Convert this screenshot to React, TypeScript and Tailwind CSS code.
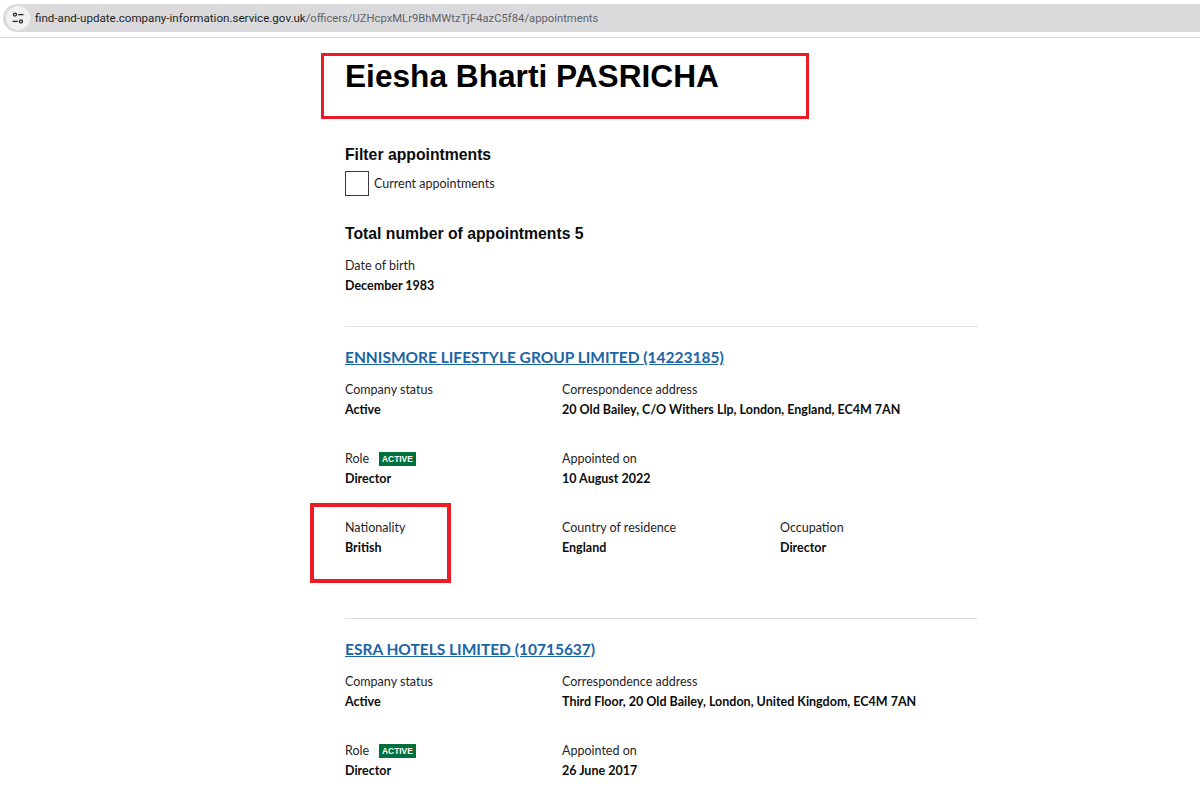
import React from 'react';

type Field = { label: string; value: string; badge?: boolean };

type Appointment = {
  title: string;
  rows: Field[][];
};

const appointments: Appointment[] = [
  {
    title: 'ENNISMORE LIFESTYLE GROUP LIMITED (14223185)',
    rows: [
      [
        { label: 'Company status', value: 'Active' },
        { label: 'Correspondence address', value: '20 Old Bailey, C/O Withers Llp, London, England, EC4M 7AN' },
      ],
      [
        { label: 'Role', value: 'Director', badge: true },
        { label: 'Appointed on', value: '10 August 2022' },
      ],
      [
        { label: 'Nationality', value: 'British' },
        { label: 'Country of residence', value: 'England' },
        { label: 'Occupation', value: 'Director' },
      ],
    ],
  },
  {
    title: 'ESRA HOTELS LIMITED (10715637)',
    rows: [
      [
        { label: 'Company status', value: 'Active' },
        { label: 'Correspondence address', value: 'Third Floor, 20 Old Bailey, London, United Kingdom, EC4M 7AN' },
      ],
      [
        { label: 'Role', value: 'Director', badge: true },
        { label: 'Appointed on', value: '26 June 2017' },
      ],
    ],
  },
];

const FieldBlock: React.FC<{ field: Field }> = ({ field }) => (
  <div>
    <div className="flex h-5 items-center whitespace-nowrap text-[12.5px] text-[#1f2328]">
      {field.label}
      {field.badge && (
        <span className="ml-[10px] bg-[#00703c] px-[3px] font-['Liberation_Sans',sans-serif] text-[8.4px] leading-[14px] font-bold text-white">
          ACTIVE
        </span>
      )}
    </div>
    <div className="flex h-5 items-center whitespace-nowrap text-[12.5px] font-bold text-[#0b0c0c]">{field.value}</div>
  </div>
);

const App: React.FC = () => {
  return (
    <div className="relative h-[804px] w-[1200px] overflow-hidden bg-white font-['Lato',sans-serif]">
      {/* Browser address bar */}
      <div className="h-[38px] border-b border-[#dcdcdc] pt-1">
        <div className="ml-[3px] flex h-[28px] items-center rounded-l-full bg-[#dadadc] pl-[3px]">
          <div className="flex h-[24px] w-[24px] items-center justify-center rounded-full bg-[#f1f1f2]">
            <svg width="12" height="12" viewBox="0 0 12 12" fill="none" stroke="#262626" strokeWidth="1.3">
              <circle cx="3" cy="2.6" r="1.5" />
              <path d="M6.2 2.6H11.5" />
              <circle cx="9" cy="9.4" r="1.5" />
              <path d="M0.5 9.4H5.8" />
            </svg>
          </div>
          <div className="ml-[5px] pt-[1px] whitespace-nowrap font-['Roboto',sans-serif] text-[11.6px] text-[#1f1f1f]">
            find-and-update.company-information.service.gov.uk
            <span className="text-[11.25px] text-[#5f6368]">/officers/UZHcpxMLr9BhMWtzTjF4azC5f84/appointments</span>
          </div>
        </div>
      </div>

      {/* Page content */}
      <main className="ml-[345px] w-[633px]">
        <h1 className="mt-[19px] font-['Liberation_Sans',sans-serif] text-[31.65px] leading-[38px] font-bold text-black">
          Eiesha Bharti PASRICHA
        </h1>

        <h2 className="mt-[50px] font-['Liberation_Sans',sans-serif] text-[15.75px] leading-5 font-bold text-[#0b0c0c]">
          Filter appointments
        </h2>
        <label className="mt-[6px] flex items-center">
          <span className="h-[25px] w-[24px] border border-[#3a3a3a] bg-white" />
          <span className="ml-[5px] pt-[1px] text-[12.5px] text-[#1f2328]">Current appointments</span>
        </label>

        <h2 className="mt-[28px] font-['Liberation_Sans',sans-serif] text-[15.75px] leading-5 font-bold text-[#0b0c0c]">
          Total number of appointments 5
        </h2>
        <div className="mt-[12px] flex h-5 items-center text-[12.5px] text-[#1f2328]">Date of birth</div>
        <div className="mb-[30px] flex h-5 items-center text-[12.5px] font-bold text-[#0b0c0c]">December 1983</div>

        {appointments.map((appointment) => (
          <section key={appointment.title} className="border-t border-[#dedfe0] pt-[19px] pb-[60px]">
            <a className="block text-[15.5px] leading-[22px] font-bold text-[#1a65a6] underline" href="#">
              {appointment.title}
            </a>
            <div className="mt-[12px] flex flex-col gap-[29px]">
              {appointment.rows.map((row, i) => (
                <div key={i} className="grid grid-cols-[217px_218px_1fr]">
                  {row.map((field) => (
                    <FieldBlock key={field.label} field={field} />
                  ))}
                </div>
              ))}
            </div>
          </section>
        ))}
      </main>

      {/* Red annotation boxes */}
      <div className="absolute top-[53px] left-[321px] h-[66px] w-[488px] border-[3px] border-[#ed1c24]" />
      <div className="absolute top-[503px] left-[310px] h-[80px] w-[141px] border-[4px] border-[#ed1c24]" />
    </div>
  );
};

export default App;
